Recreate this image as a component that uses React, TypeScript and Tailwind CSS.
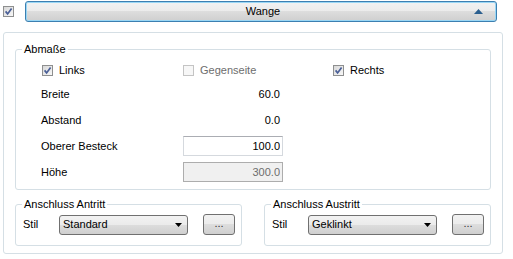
import type { ReactNode } from 'react'

function Check({ checked, disabled }: { checked?: boolean; disabled?: boolean }) {
  return (
    <span
      className={`flex h-[11px] w-[11px] shrink-0 items-center justify-center border ${
        disabled
          ? 'border-[#c4c4c4] bg-[#f7f7f7]'
          : 'border-[#8e8f8f] bg-[linear-gradient(135deg,#d8d8d8,#f8f8f8)]'
      }`}
    >
      {checked && (
        <svg width="9" height="9" viewBox="0 0 9 9">
          <path d="M1.6 4.4 L3.6 6.9 L7.6 1.4" fill="none" stroke="#4a5f97" strokeWidth="1.7" />
        </svg>
      )}
    </span>
  )
}

function Row({ label, className, children }: { label: string; className: string; children: ReactNode }) {
  return (
    <div className={`flex h-[20px] items-center ${className}`}>
      <span className="w-[142px]">{label}</span>
      {children}
    </div>
  )
}

function Anschluss({ title, value }: { title: string; value: string }) {
  return (
    <fieldset className="w-[227px] rounded-[3px] border border-[#d5dfe5]">
      <legend className="ml-[6px] px-[2px] leading-[13px]">{title}</legend>
      <div className="pt-[2px] pb-[9px] pl-[7px]">
        <div className="flex h-[23px] items-center">
          <span className="w-[36px]">Stil</span>
          {/* Combo */}
          <div className="flex h-[20px] w-[129px] items-center rounded-[3px] border border-[#707070] bg-[linear-gradient(to_bottom,#f2f2f2_0%,#ebebeb_50%,#dddddd_50%,#cfcfcf_100%)] pl-[3px] pr-[5px]">
            <span className="flex-1">{value}</span>
            <svg width="7" height="4" viewBox="0 0 7 4">
              <polygon points="0,0 7,0 3.5,4" fill="#000" />
            </svg>
          </div>
          <button className="ml-[15px] flex h-[21px] w-[32px] items-center justify-center rounded-[3px] border border-[#707070] bg-[linear-gradient(to_bottom,#f2f2f2_0%,#ebebeb_50%,#dddddd_50%,#cfcfcf_100%)] pb-[2px] text-[#333]">
            ...
          </button>
        </div>
      </div>
    </fieldset>
  )
}

export default function App() {
  return (
    <div className="h-[259px] w-[513px] overflow-hidden bg-white pl-[3px] pt-[1px] font-['Liberation_Sans',Arial,sans-serif] text-[11px] leading-[13px] text-black">
      {/* Header row */}
      <div className="flex h-[21px] items-center">
        <Check checked />
        <button className="ml-[11px] flex h-[21px] w-[472px] items-center rounded-[3px] border border-[#3c7fb1] bg-[linear-gradient(to_bottom,#f2f2f2_0%,#ebebeb_50%,#dddddd_50%,#cfcfcf_100%)] pl-[26px] pr-[13px] shadow-[inset_0_0_0_1px_#9ad7f5]">
          <span className="flex-1 text-center">Wange</span>
          <svg width="9" height="5" viewBox="0 0 9 5">
            <polygon points="0,5 9,5 4.5,0" fill="#2b5f8f" />
          </svg>
        </button>
      </div>

      {/* Panel */}
      <div className="mt-[10px] w-[500px] rounded-[3px] border border-[#d5dfe5] px-[11px] pt-[10px] pb-[7px]">
        <fieldset className="rounded-[3px] border border-[#d5dfe5]">
          <legend className="ml-[6px] px-[2px] leading-[13px]">Abmaße</legend>
          <div className="flex flex-col pl-[25px] pt-[4px] pb-[7px]">
            <div className="flex h-[20px] items-center">
              <div className="flex w-[142px] items-center gap-[6px] pl-[1px]">
                <Check checked />
                <span>Links</span>
              </div>
              <div className="flex w-[150px] items-center gap-[6px]">
                <Check disabled />
                <span className="text-[#6d6d6d]">Gegenseite</span>
              </div>
              <div className="flex items-center gap-[6px]">
                <Check checked />
                <span>Rechts</span>
              </div>
            </div>
            <Row label="Breite" className="mt-[4px]">
              <span className="w-[100px] pr-[3px] text-right">60.0</span>
            </Row>
            <Row label="Abstand" className="mt-[6px]">
              <span className="w-[100px] pr-[3px] text-right">0.0</span>
            </Row>
            <Row label="Oberer Besteck" className="mt-[6px]">
              <input
                readOnly
                value="100.0"
                className="h-[20px] w-[100px] border border-[#d5d9de] border-t-[#abadb3] bg-white px-[2px] text-right outline-none"
              />
            </Row>
            <Row label="Höhe" className="mt-[6px]">
              <input
                readOnly
                value="300.0"
                className="h-[20px] w-[100px] border border-[#adadad] bg-[#f0f0f0] px-[2px] text-right text-[#6d6d6d] outline-none"
              />
            </Row>
          </div>
        </fieldset>

        <div className="mt-[8px] flex justify-between">
          <Anschluss title="Anschluss Antritt" value="Standard" />
          <Anschluss title="Anschluss Austritt" value="Geklinkt" />
        </div>
      </div>
    </div>
  )
}
